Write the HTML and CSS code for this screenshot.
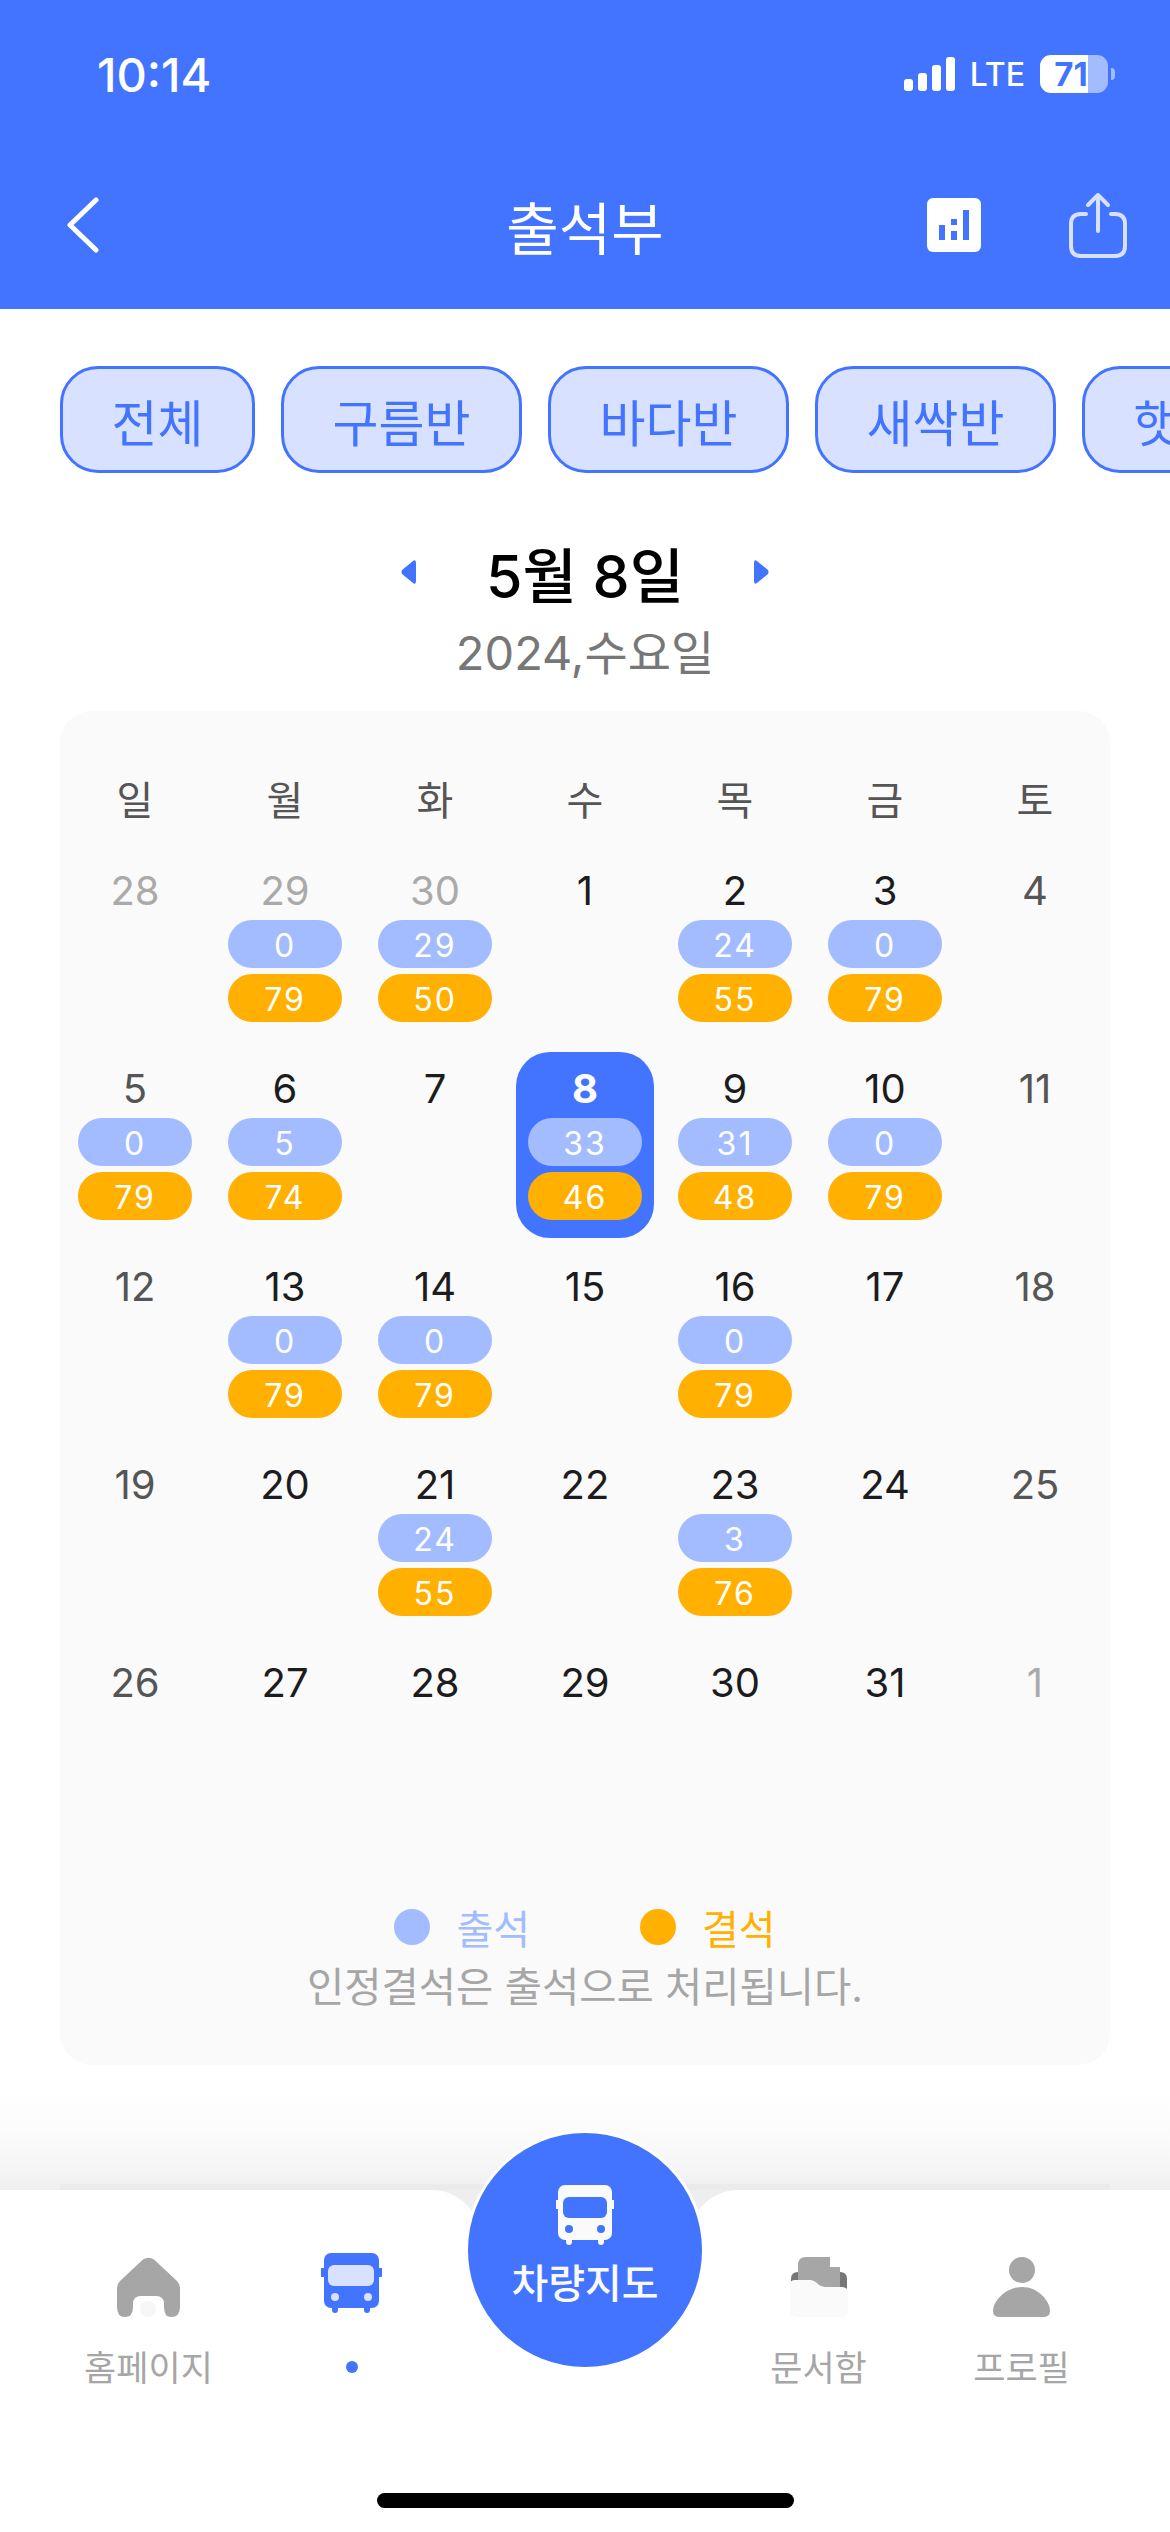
FILE: index.html
```html
<!DOCTYPE html>
<html lang="ko">
<head>
    <meta charset="UTF-8">
    <title>출석부</title>
    <link rel="stylesheet" href="styles.css">
</head>
<body>
    <!-- top blue area -->
    <header class="top">
        <div class="status">
            <span class="time">10:14</span>
            <div class="status-right">
                <svg class="signal" viewBox="0 0 51 34" width="51" height="34">
                    <rect x="0" y="22" width="9" height="12" rx="3"/>
                    <rect x="14" y="16" width="9" height="18" rx="3"/>
                    <rect x="28" y="8" width="9" height="26" rx="3"/>
                    <rect x="42" y="0" width="9" height="34" rx="3"/>
                </svg>
                <span class="lte">LTE</span>
                <div class="battery">71</div>
            </div>
        </div>
        <div class="nav">
            <svg class="back" viewBox="0 0 34 56" width="34" height="56">
                <path d="M30 3 L4 28 L30 53" fill="none" stroke="#fff" stroke-width="5" stroke-linecap="round" stroke-linejoin="round"/>
            </svg>
            <h1 class="title">출석부</h1>
            <div class="nav-right">
                <svg viewBox="0 0 54 54" width="54" height="54">
                    <rect width="54" height="54" rx="6" fill="#fff"/>
                    <path d="M12 27h6v15h-6z M24 21h6v6h-6z M24 33h6v9h-6z M36 12h6v30h-6z" fill="#4274ff"/>
                </svg>
                <svg viewBox="0 0 58 65" width="58" height="65">
                    <path d="M17 21 H12 Q2 21 2 31 V53 Q2 63 12 63 H46 Q56 63 56 53 V31 Q56 21 46 21 H42 M29 38 V3 M19 12 L29 2 L39 12" fill="none" stroke="#d7e1ff" stroke-width="4" stroke-linecap="round" stroke-linejoin="round"/>
                </svg>
            </div>
        </div>
    </header>

    <main class="content">
        <div class="chips">
            <div class="chip">전체</div>
            <div class="chip">구름반</div>
            <div class="chip">바다반</div>
            <div class="chip">새싹반</div>
            <div class="chip">햇살반</div>
        </div>

        <div class="date-row">
            <svg viewBox="0 0 15 24" width="15" height="24"><path d="M12 1 Q15 -1 15 3 V21 Q15 25 12 23 L1 14 Q0 12 1 10 Z" fill="#4274ff"/></svg>
            <span class="date">5월 8일</span>
            <svg viewBox="0 0 15 24" width="15" height="24"><path d="M3 1 Q0 -1 0 3 V21 Q0 25 3 23 L14 14 Q15 12 14 10 Z" fill="#4274ff"/></svg>
        </div>
        <p class="subdate">2024,수요일</p>

        <section class="card">
            <div class="week">
                <span>일</span><span>월</span><span>화</span><span>수</span><span>목</span><span>금</span><span>토</span>
            </div>
            <div class="days">
                <!-- 1주 -->
                <div class="day off"><b>28</b></div>
                <div class="day off"><b>29</b><i class="pill blue">0</i><i class="pill orange">79</i></div>
                <div class="day off"><b>30</b><i class="pill blue">29</i><i class="pill orange">50</i></div>
                <div class="day"><b>1</b></div>
                <div class="day"><b>2</b><i class="pill blue">24</i><i class="pill orange">55</i></div>
                <div class="day"><b>3</b><i class="pill blue">0</i><i class="pill orange">79</i></div>
                <div class="day end"><b>4</b></div>
                <!-- 2주 -->
                <div class="day end"><b>5</b><i class="pill blue">0</i><i class="pill orange">79</i></div>
                <div class="day"><b>6</b><i class="pill blue">5</i><i class="pill orange">74</i></div>
                <div class="day"><b>7</b></div>
                <div class="day today"><b>8</b><i class="pill blue">33</i><i class="pill orange">46</i></div>
                <div class="day"><b>9</b><i class="pill blue">31</i><i class="pill orange">48</i></div>
                <div class="day"><b>10</b><i class="pill blue">0</i><i class="pill orange">79</i></div>
                <div class="day end"><b>11</b></div>
                <!-- 3주 -->
                <div class="day end"><b>12</b></div>
                <div class="day"><b>13</b><i class="pill blue">0</i><i class="pill orange">79</i></div>
                <div class="day"><b>14</b><i class="pill blue">0</i><i class="pill orange">79</i></div>
                <div class="day"><b>15</b></div>
                <div class="day"><b>16</b><i class="pill blue">0</i><i class="pill orange">79</i></div>
                <div class="day"><b>17</b></div>
                <div class="day end"><b>18</b></div>
                <!-- 4주 -->
                <div class="day end"><b>19</b></div>
                <div class="day"><b>20</b></div>
                <div class="day"><b>21</b><i class="pill blue">24</i><i class="pill orange">55</i></div>
                <div class="day"><b>22</b></div>
                <div class="day"><b>23</b><i class="pill blue">3</i><i class="pill orange">76</i></div>
                <div class="day"><b>24</b></div>
                <div class="day end"><b>25</b></div>
                <!-- 5주 -->
                <div class="day end"><b>26</b></div>
                <div class="day"><b>27</b></div>
                <div class="day"><b>28</b></div>
                <div class="day"><b>29</b></div>
                <div class="day"><b>30</b></div>
                <div class="day"><b>31</b></div>
                <div class="day off"><b>1</b></div>
            </div>

            <div class="legend">
                <div class="legend-item blue-text"><span class="legend-dot blue"></span>출석</div>
                <div class="legend-item orange-text"><span class="legend-dot orange"></span>결석</div>
            </div>
            <p class="note">인정결석은 출석으로 처리됩니다.</p>
        </section>
    </main>

    <div class="shade"></div>

    <footer class="tabbar">
        <div class="panel panel-left">
            <div class="tab">
                <svg viewBox="0 0 63 60" width="63" height="60">
                    <path d="M26 2.5 Q31.5 -1 37 2.5 L60 24 Q63 27 63 31 V50 Q63 60 54 60 Q47 60 47 50 V47 Q47 39 39 39 H24 Q16 39 16 47 V50 Q16 60 8 60 Q0 60 0 50 V31 Q0 27 3 24 Z" fill="#a6a6a6"/>
                    <circle cx="31" cy="52" r="8" fill="#f7f7f7"/>
                </svg>
                <span>홈페이지</span>
            </div>
            <div class="tab tab-active">
                <svg viewBox="0 0 61 60" width="61" height="60">
                    <path d="M0 15h4v9H0z M57 15h4v9h-4z M11 53h6v4a3 3 0 0 1-6 0z M43 53h6v4a3 3 0 0 1-6 0z" fill="#4274ff"/>
                    <rect x="3" y="0" width="55" height="55" rx="7" fill="#4274ff"/>
                    <rect x="7" y="12" width="46" height="21" rx="6" fill="#d8e1ff"/>
                    <circle cx="14" cy="44" r="4" fill="#d8e1ff"/>
                    <circle cx="47" cy="44" r="4" fill="#d8e1ff"/>
                </svg>
                <span class="tab-dot"></span>
            </div>
        </div>
        <div class="panel-mid"></div>
        <div class="panel panel-right">
            <div class="tab">
                <svg viewBox="0 0 58 60" width="58" height="60">
                    <path d="M1 22 Q1 15 8 15 H50 Q57 15 57 22 V40 H1 Z" fill="#777"/>
                    <path d="M8 8 Q8 0 16 0 H40 V10 H50 V34 H8 Z" fill="#a6a6a6"/>
                    <path d="M0 28 Q0 23 5 23 H20 Q24 23 28 27 Q31 30 35 30 H52 Q58 30 58 36 V53 Q58 60 51 60 H7 Q0 60 0 53 Z" fill="#fafafa"/>
                </svg>
                <span>문서함</span>
            </div>
            <div class="tab">
                <svg viewBox="0 0 58 60" width="58" height="60">
                    <circle cx="29" cy="13" r="13" fill="#a6a6a6"/>
                    <path d="M29 30 C45 30 57 44 57 54 Q57 60 50 60 H7 Q0 60 0 54 C0 44 13 30 29 30 Z" fill="#a6a6a6"/>
                </svg>
                <span>프로필</span>
            </div>
        </div>

        <!-- 가운데 동그란 버튼 -->
        <div class="map-btn">
            <svg viewBox="0 0 58 60" width="58" height="60">
                <path d="M0 15h4v9H0z M54 15h4v9h-4z M10 53h6v4a3 3 0 0 1-6 0z M42 53h6v4a3 3 0 0 1-6 0z" fill="#fafafa"/>
                <rect x="2" y="0" width="54" height="55" rx="7" fill="#fafafa"/>
                <rect x="7" y="12" width="44" height="21" rx="6" fill="#4274ff"/>
                <circle cx="13" cy="44" r="4" fill="#4274ff"/>
                <circle cx="45" cy="44" r="4" fill="#4274ff"/>
            </svg>
            <span>차량지도</span>
        </div>
        <div class="home-bar"></div>
    </footer>
</body>
</html>
```

FILE: styles.css
```css
*{
    box-sizing: border-box;
}
body{
    margin: 0;
    width: 1170px;
    height: 2532px;
    overflow: hidden;
    background-color: #fff;
    font-family: "Inter", "Noto Sans CJK KR", sans-serif;
    display: flex;
    flex-direction: column;
}

/* header */
.top{
    height: 309px;
    background-color: #4274ff;
    color: #fff;
}
.status{
    height: 148px;
    padding: 0 55px 0 97px;
    display: flex;
    align-items: center;
    justify-content: space-between;
}
.time{
    font-size: 47px;
    font-weight: 500;
}
.status-right{
    display: flex;
    align-items: center;
}
.signal{
    fill: #fff;
    margin-right: 15px;
}
.lte{
    font-size: 32px;
    font-weight: 500;
    margin-right: 15px;
}
.battery{
    position: relative;
    width: 68px;
    height: 38px;
    margin-right: 7px;
    padding-right: 6px;
    border-radius: 11px;
    background: linear-gradient(90deg, #fff 71%, #a3bcff 71%);
    color: #4274ff;
    font-size: 33px;
    font-weight: 700;
    line-height: 38px;
    text-align: center;
}
.battery::after{
    content: "";
    position: absolute;
    top: 13px;
    right: -7px;
    width: 4px;
    height: 12px;
    border-radius: 0 6px 6px 0;
    background-color: #a3bcff;
}
.nav{
    height: 154px;
    padding: 0 43px;
    display: grid;
    grid-template-columns: 1fr auto 1fr;
    align-items: center;
}
.back{
    margin-left: 23px;
}
.title{
    margin: 0;
    font-size: 57px;
    font-weight: 400;
}
.nav-right{
    display: flex;
    align-items: center;
    justify-content: flex-end;
    gap: 88px;
}

/* chips */
.content{
    flex: none;
    height: 1756px;
}
.chips{
    display: flex;
    gap: 26px;
    padding: 57px 0 0 60px;
    overflow: hidden;
}
.chip{
    flex: none;
    height: 107px;
    padding: 0 48.5px;
    display: flex;
    align-items: center;
    border: 3px solid #4274ff;
    border-radius: 38px;
    background-color: #d8e1ff;
    color: #4274ff;
    font-size: 50px;
}

/* date */
.date-row{
    margin-top: 62px;
    height: 74px;
    display: flex;
    align-items: center;
    justify-content: center;
    gap: 70px;
}
.date{
    font-size: 59px;
    font-weight: 500;
    color: #000;
}
.subdate{
    margin: 19px 0 0;
    height: 50px;
    line-height: 50px;
    text-align: center;
    font-size: 47px;
    color: #777;
}

/* calendar */
.card{
    margin: 33px 60px 0;
    height: 1354px;
    border-radius: 32px;
    background-color: #fafafa;
    padding-top: 66px;
}
.week{
    display: grid;
    grid-template-columns: repeat(7, 150px);
    height: 48px;
    line-height: 48px;
    text-align: center;
    font-size: 40px;
    color: #555;
}
.days{
    margin-top: 29px;
    display: grid;
    grid-template-columns: repeat(7, 150px);
    grid-auto-rows: 186px;
    row-gap: 12px;
    justify-items: center;
}
.day{
    width: 138px;
    padding-top: 12px;
    display: flex;
    flex-direction: column;
    align-items: center;
    gap: 6px;
    color: #1c1c1e;
}
.day b{
    height: 50px;
    margin-bottom: -2px;
    line-height: 50px;
    font-size: 40px;
    font-weight: 400;
}
.day.off{
    color: #aaa;
}
.day.end{
    color: #555;
}
.day.today{
    background-color: #4274ff;
    border-radius: 34px;
    color: #fff;
}
.day.today b{
    font-weight: 700;
}
.pill{
    width: 114px;
    height: 48px;
    padding-top: 2px;
    border-radius: 24px;
    line-height: 48px;
    text-align: center;
    font-style: normal;
    font-size: 32px;
    letter-spacing: 2px;
    color: #fff;
}
.blue{
    background-color: #a3bcff;
}
.orange{
    background-color: #ffb000;
}

/* legend */
.legend{
    margin-top: 70px;
    height: 50px;
    display: flex;
    justify-content: center;
    gap: 110px;
}
.legend-item{
    display: flex;
    align-items: center;
    gap: 26px;
    font-size: 40px;
}
.legend-dot{
    width: 36px;
    height: 36px;
    border-radius: 50%;
}
.blue-text{
    color: #a3bcff;
}
.orange-text{
    color: #ffb000;
}
.note{
    margin: 11px 0 0;
    height: 50px;
    line-height: 50px;
    text-align: center;
    font-size: 40.5px;
    color: #a6a6a6;
}

/* bottom */
.shade{
    flex: none;
    height: 125px;
    background:
        linear-gradient(#ebebeb, #ebebeb) center bottom / 1050px 6px no-repeat,
        linear-gradient(180deg, #fff 20%, #fcfcfc 50%, #f6f6f6 80%, #efefef 100%);
}
.tabbar{
    position: relative;
    flex: none;
    height: 342px;
    display: grid;
    grid-template-columns: 480px 210px 480px;
    background-color: #eeeeee;
}
.panel{
    background-color: #fff;
    display: flex;
    align-items: flex-start;
    padding-top: 67px;
}
.panel-left{
    border-top-right-radius: 48px;
    padding-left: 47px;
}
.panel-right{
    border-top-left-radius: 48px;
    padding-left: 27px;
}
.panel-mid{
    margin-top: 60px;
    background-color: #fff;
}
.tab{
    width: 203px;
    display: flex;
    flex-direction: column;
    align-items: center;
    color: #a6a6a6;
    font-size: 35px;
}
.tab span{
    margin-top: 26px;
    height: 50px;
    line-height: 50px;
}
.tab-active{
    margin-top: -4px;
}
.tab .tab-dot{
    margin-top: 48px;
    width: 12px;
    height: 12px;
    border-radius: 50%;
    background-color: #4274ff;
}
.map-btn{
    position: absolute;
    left: 465px;
    top: -60px;
    width: 240px;
    height: 240px;
    padding-top: 52px;
    border: 3px solid #fff;
    border-radius: 50%;
    background-color: #4274ff;
    display: flex;
    flex-direction: column;
    align-items: center;
    color: #fafafa;
    font-size: 40px;
    font-weight: 500;
}
.map-btn span{
    margin-top: 10px;
    line-height: 58px;
}
.home-bar{
    position: absolute;
    left: 377px;
    top: 303px;
    width: 417px;
    height: 15px;
    border-radius: 8px;
    background-color: #000;
}
```
